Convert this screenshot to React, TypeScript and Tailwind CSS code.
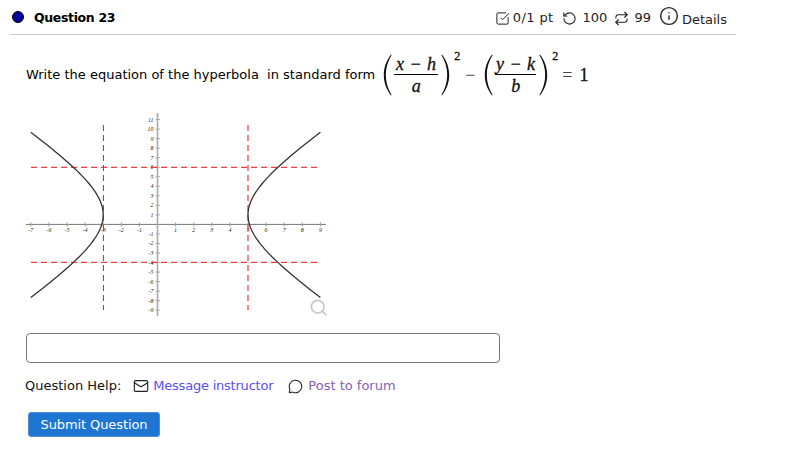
import { Info, Mail, MessageCircle, Repeat, RotateCcw, Search, SquareCheckBig } from "lucide-react";

const px = (x: number) => 157.5 + 18.1 * x;
const py = (y: number) => 224.4 - 9.53 * y;

function branch(sign: number, up: number) {
  const pts: string[] = [];
  for (let i = 0; i <= 40; i++) {
    const t = i / 40;
    const xx = 1 + sign * (4 + 4 * t * t);
    const yy = 1 + up * 5 * Math.sqrt(Math.max(((xx - 1) / 4) ** 2 - 1, 0));
    pts.push(`${px(xx).toFixed(1)},${py(yy).toFixed(1)}`);
  }
  return pts.join(" ");
}

function Graph() {
  const xs = [-7, -6, -5, -4, -3, -2, -1, 1, 2, 3, 4, 5, 6, 7, 8, 9];
  const ys = [-9, -8, -7, -6, -5, -4, -3, -2, -1, 1, 2, 3, 4, 5, 6, 7, 8, 9, 10, 11];
  return (
    <svg width="340" height="210" viewBox="0 110 340 210" className="block">
      <line x1="26" x2="326" y1="224.4" y2="224.4" stroke="#777" strokeWidth="1" />
      <line x1="157.5" x2="157.5" y1="113" y2="316" stroke="#aaa" strokeWidth="1.6" />
      {xs.map((x) => (
        <g key={x}>
          <line x1={px(x)} x2={px(x)} y1="222.5" y2="226.5" stroke="#999" />
          <text x={px(x)} y="232" fontSize="6" fontStyle="italic" textAnchor="middle" fill="#222" fontFamily="Liberation Serif, serif">{x}</text>
        </g>
      ))}
      {ys.map((y) => (
        <g key={y}>
          <line x1="155.5" x2="160" y1={py(y)} y2={py(y)} stroke="#aaa" />
          <text x="153.5" y={py(y) + 2} fontSize="6" fontStyle="italic" textAnchor="end" fill="#222" fontFamily="Liberation Serif, serif">{y}</text>
        </g>
      ))}
      <g stroke="#ee1010" strokeWidth="1" strokeDasharray="6 4" fill="none">
        <line x1="31" x2="317" y1="167.3" y2="167.3" />
        <line x1="31" x2="317" y1="262.3" y2="262.3" />
        <line x1="103.4" x2="103.4" y1="125" y2="310" />
        <line x1="248" x2="248" y1="125" y2="310" />
      </g>
      <g stroke="#333" strokeWidth="1.3" fill="none">
        <polyline points={branch(-1, 1)} />
        <polyline points={branch(-1, -1)} />
        <polyline points={branch(1, 1)} />
        <polyline points={branch(1, -1)} />
      </g>
    </svg>
  );
}

function Paren({ right }: { right?: boolean }) {
  return (
    <svg width="9" height="42" viewBox="0 0 9 42" className={right ? "-scale-x-100" : ""}>
      <path d="M8 0.5 C3 7 0.8 14 0.8 21 C0.8 28 3 35 8 41.5 L8.6 41 C4.6 34 2.8 28 2.8 21 C2.8 14 4.6 8 8.6 1 Z" fill="#111" />
    </svg>
  );
}

function Frac({ top, bottom, w }: { top: string; bottom: string; w: string }) {
  return (
    <span className={`flex flex-col items-center ${w}`}>
      <span className="text-[18px] leading-[20px] italic whitespace-pre h-[21px] text-[#111] border-b border-black w-full text-center tracking-[0.5px] [-webkit-text-stroke:0.3px_#111]">{top}</span>
      <span className="text-[18px] leading-[22px] italic text-[#111] [-webkit-text-stroke:0.3px_#111]">{bottom}</span>
    </span>
  );
}

export default function App() {
  return (
    <div className="w-[802px] h-[462px] bg-white overflow-hidden text-black font-['DejaVu_Sans',sans-serif] text-[13px]">
      <div className="ml-[10px] w-[726px] h-[35px] border-b border-[#cccccc] flex items-center">
        <span className="ml-[2px] w-[12px] h-[12px] rounded-full bg-[#00009e] border border-black" />
        <span className="ml-[10px] pt-[2px] font-bold text-[12.5px] tracking-[-0.35px]">Question 23</span>
        <div className="ml-auto mr-[9px] flex items-center text-[#222] pt-[2px]">
          <SquareCheckBig size={15} strokeWidth={1.6} />
          <span className="ml-[3px] tracking-[0.4px]">0/1 pt</span>
          <RotateCcw size={15} strokeWidth={1.7} className="ml-[8px]" />
          <span className="ml-[6px]">100</span>
          <Repeat size={15} strokeWidth={1.7} className="ml-[7px]" />
          <span className="ml-[5px]">99</span>
          <Info size={20} strokeWidth={1.7} className="ml-[8px] -mt-[4px]" />
          <span className="ml-[3px] pt-[4px]">Details</span>
        </div>
      </div>

      <div className="ml-[26px] mt-[12px] h-[56px] flex items-center">
        <span className="whitespace-pre">Write the equation of the hyperbola  in standard form</span>
        <span className="ml-[8px] flex items-center font-['Liberation_Serif',serif]">
          <Paren />
          <span className="w-[2px]" />
          <Frac top="x − h" bottom="a" w="w-[44px]" />
          <span className="w-[3px]" />
          <Paren right />
          <sup className="ml-[4px] text-[12px] -mt-[26px] self-center [-webkit-text-stroke:0.3px_#111]">2</sup>
          <span className="ml-[4px] w-[12px] text-center text-[#555] text-[18px]">−</span>
          <span className="w-[8px]" />
          <Paren />
          <span className="w-[2px]" />
          <Frac top="y − k" bottom="b" w="w-[41px]" />
          <span className="w-[3px]" />
          <Paren right />
          <sup className="ml-[4px] text-[12px] -mt-[26px] self-center [-webkit-text-stroke:0.3px_#111]">2</sup>
          <span className="ml-[4px] text-[18px] text-[#444]">=</span>
          <span className="ml-[7px] text-[18px] text-[#111] [-webkit-text-stroke:0.3px_#111]">1</span>
        </span>
      </div>

      <div className="mt-[7px] relative">
        <Graph />
        <Search size={19} strokeWidth={2.2} color="#c8c8c8" className="absolute left-[309px] top-[188px]" />
      </div>

      <div className="ml-[26px] mt-[13px] w-[474px] h-[30px] border border-[#767676] rounded-[4px]" />

      <div className="ml-[25px] mt-[13px] h-[20px] flex items-center text-[#111]">
        <span>Question Help:</span>
        <Mail size={16} strokeWidth={1.7} className="ml-[12px] text-[#222]" />
        <span className="ml-[4px] text-[#5a50f0] tracking-[-0.22px]">Message instructor</span>
        <MessageCircle size={15} strokeWidth={1.7} className="ml-[15px] text-[#222]" />
        <span className="ml-[5px] text-[#8560b8]">Post to forum</span>
      </div>

      <div className="ml-[28px] mt-[16px] w-[132px] h-[25px] flex items-center justify-center pt-[1px] rounded-[3px] bg-[#1e76d2] border border-[#4d8fd6] text-white text-[13px] tracking-[-0.1px]">
        Submit Question
      </div>
    </div>
  );
}
